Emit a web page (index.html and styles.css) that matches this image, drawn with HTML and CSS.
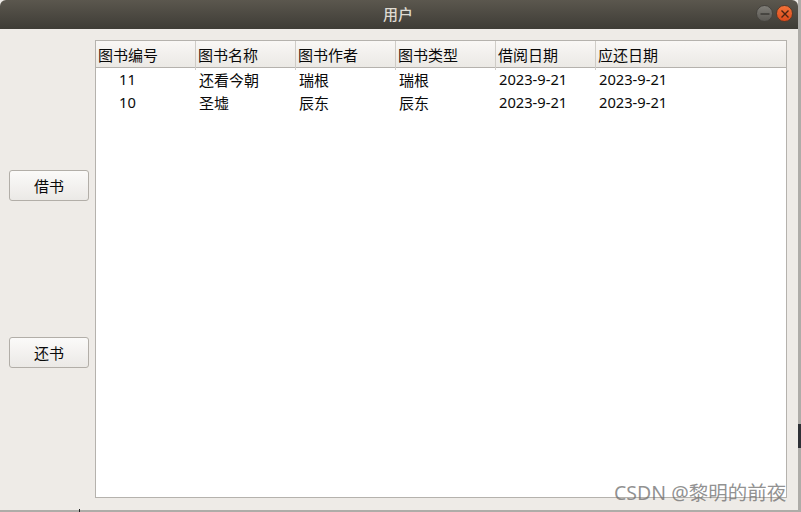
FILE: index.html
```html
<!DOCTYPE html>
<html lang="zh">
<head>
<meta charset="utf-8">
<title>用户</title>
<link rel="stylesheet" href="styles.css">
</head>
<body>
<div class="window">
  <header class="titlebar">
    <span class="title">用户</span>
    <div class="controls">
      <span class="ctl ctl-min"><svg width="12" height="12" viewBox="0 0 12 12"><path d="M1.5 6h9" stroke="#2f2e2a" stroke-width="1.2"/></svg></span>
      <span class="ctl ctl-close"><svg width="12" height="12" viewBox="0 0 12 12"><path d="M2.5 2.5l7 7M9.5 2.5l-7 7" stroke="#4a2312" stroke-width="1.4"/></svg></span>
    </div>
  </header>
  <main class="content">
    <aside class="side">
      <button class="btn">借书</button>
      <button class="btn">还书</button>
    </aside>
    <section class="table">
      <div class="row head">
        <div class="th">图书编号</div>
        <div class="th">图书名称</div>
        <div class="th">图书作者</div>
        <div class="th">图书类型</div>
        <div class="th">借阅日期</div>
        <div class="th">应还日期</div>
      </div>
      <div class="row body-row">
        <div class="td num">11</div>
        <div class="td">还看今朝</div>
        <div class="td">瑞根</div>
        <div class="td">瑞根</div>
        <div class="td date">2023-9-21</div>
        <div class="td date">2023-9-21</div>
      </div>
      <div class="row body-row">
        <div class="td num">10</div>
        <div class="td">圣墟</div>
        <div class="td">辰东</div>
        <div class="td">辰东</div>
        <div class="td date">2023-9-21</div>
        <div class="td date">2023-9-21</div>
      </div>
    </section>
  </main>
</div>
<div class="dark-edge"></div>
<div class="tick"></div>
<div class="watermark">CSDN @黎明的前夜</div>
</body>
</html>
```
FILE: styles.css
```css
* { box-sizing: border-box; }
html, body { margin: 0; padding: 0; }
body {
  width: 801px;
  height: 512px;
  overflow: hidden;
  position: relative;
  background: #aeaca8;
  font-family: "Noto Sans", "Noto Sans CJK SC", sans-serif;
  font-size: 15px;
  color: #0a0a0a;
}
.window {
  width: 798px;
  height: 510px;
  display: flex;
  flex-direction: column;
  background: #eeebe7;
}
.titlebar {
  height: 29px;
  flex: none;
  display: flex;
  align-items: center;
  justify-content: center;
  position: relative;
  border-radius: 6px 6px 0 0;
  background: linear-gradient(#5b574e, #3e3c36);
}
.title { color: #dfdbd2; font-size: 15px; font-weight: 500; line-height: 29px; margin-right: 2px; }
.controls {
  position: absolute;
  right: 5px;
  top: 5px;
  display: flex;
  gap: 3px;
}
.ctl {
  width: 17px;
  height: 17px;
  border-radius: 50%;
  display: flex;
  align-items: center;
  justify-content: center;
}
.ctl-min { background: linear-gradient(#807e78, #5a5853); border: 1px solid #45433e; }
.ctl-close { background: linear-gradient(#f27238, #dc4a1c); border: 1px solid #5a3a28; }
.content {
  flex: 1;
  display: flex;
  padding: 11px 11px 12px 9px;
}
.side {
  width: 86px;
  flex: none;
  padding-top: 130px;
  display: flex;
  flex-direction: column;
  gap: 136px;
}
.btn {
  width: 80px;
  height: 31px;
  padding: 0;
  border: 1px solid #b2aea8;
  border-radius: 3px;
  background: linear-gradient(#fbfaf9, #ebe9e6);
  font: inherit;
  font-size: 15px;
  color: #0a0a0a;
}
.table {
  flex: 1;
  border: 1px solid #b5b2ad;
  background: #fff;
}
.row {
  display: grid;
  grid-template-columns: repeat(5, 100px) 1fr;
}
.head {
  height: 27px;
  background: linear-gradient(#f9f7f5, #ebe9e5);
  border-bottom: 1px solid #b5b2ad;
}
.th {
  padding-left: 2px;
  line-height: 29px;
  font-size: 15px;
  border-right: 1px solid #cfccc7;
  white-space: nowrap;
}
.th:last-child { border-right: 0; }
.body-row { height: 23px; line-height: 24px; }
.td { padding-left: 3px; font-size: 15px; white-space: nowrap; }
.date, .num { font-size: 14.7px; line-height: 23px; }
.num { padding-left: 23px; }
.dark-edge {
  position: absolute;
  left: 798px;
  top: 424px;
  width: 3px;
  height: 24px;
  background: #2e3036;
}
.tick {
  position: absolute;
  left: 79px;
  top: 509px;
  width: 1px;
  height: 3px;
  background: #222;
}
.watermark {
  position: absolute;
  left: 614px;
  top: 481px;
  font-size: 19.5px;
  line-height: 24px;
  color: rgba(110, 110, 110, 0.75);
  white-space: nowrap;
}
```
